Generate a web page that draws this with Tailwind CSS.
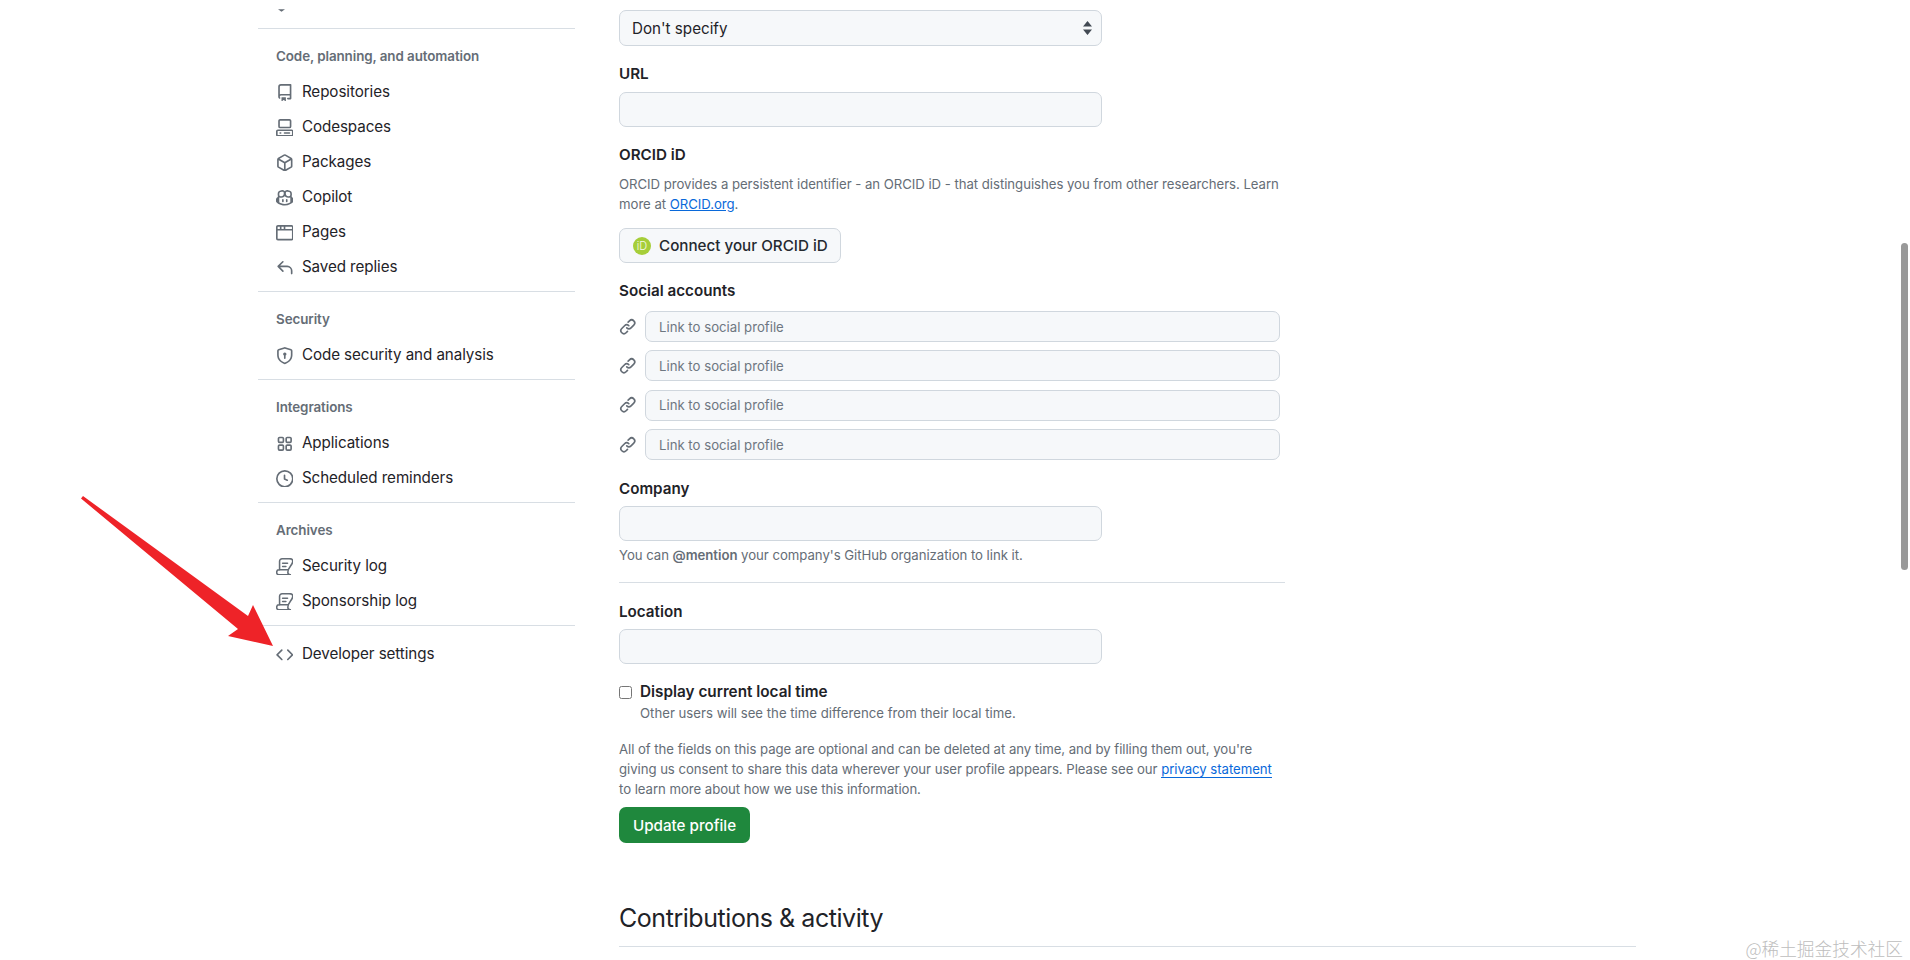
<!DOCTYPE html>
<html lang="en">
<head>
<meta charset="UTF-8">
<script src="https://cdn.jsdelivr.net/npm/@tailwindcss/browser@4"></script>
<title>Public profile</title>
</head>
<body class="relative h-screen overflow-hidden bg-white text-[#1f2328] font-['Inter',sans-serif]">

<div class="flex pl-[258px]">
  <!-- sidebar -->
  <nav class="w-[317px] shrink-0 text-[15.2px] tracking-[-0.08px] text-[#1f2328]">
    <div class="h-[28px] pl-[20px] pt-[9px]">
      <svg width="7" height="3" viewBox="0 0 8 3" class="block fill-[#656d76]"><path d="M0 0h8L4 3Z"/></svg>
    </div>

    <div class="border-t border-[#d8dee4] pb-[6px]">
      <h3 class="pt-[17px] pb-[8.8px] pl-[18px] leading-[20px] text-[13.4px] font-semibold text-[#656d76]">Code, planning, and automation</h3>
      <a class="flex h-[35.1px] items-center gap-[8.8px] pl-[17.5px]">
        <svg width="17.6" height="17.6" viewBox="0 0 16 16" class="fill-[#656d76]"><path d="M2 2.5A2.5 2.5 0 0 1 4.5 0h8.75a.75.75 0 0 1 .75.75v12.5a.75.75 0 0 1-.75.75h-2.5a.75.75 0 0 1 0-1.5h1.75v-2h-8a1 1 0 0 0-.714 1.7.75.75 0 1 1-1.072 1.05A2.495 2.495 0 0 1 2 11.5Zm10.5-1h-8a1 1 0 0 0-1 1v6.708A2.486 2.486 0 0 1 4.5 9h8ZM5 12.25a.25.25 0 0 1 .25-.25h3.5a.25.25 0 0 1 .25.25v3.25a.25.25 0 0 1-.4.2l-1.45-1.087a.249.249 0 0 0-.3 0L5.4 15.7a.25.25 0 0 1-.4-.2Z"/></svg>
        Repositories
      </a>
      <a class="flex h-[35.1px] items-center gap-[8.8px] pl-[17.5px]">
        <svg width="17.6" height="17.6" viewBox="0 0 16 16" class="fill-[#656d76]"><path d="M0 11.25c0-.966.784-1.75 1.75-1.75h12.5c.966 0 1.75.784 1.75 1.75v3A1.75 1.75 0 0 1 14.25 16H1.75A1.75 1.75 0 0 1 0 14.25Zm2-9.5C2 .784 2.784 0 3.75 0h8.5C13.216 0 14 .784 14 1.75v5a1.75 1.75 0 0 1-1.75 1.75h-8.5A1.75 1.75 0 0 1 2 6.75Zm1.75-.25a.25.25 0 0 0-.25.25v5c0 .138.112.25.25.25h8.5a.25.25 0 0 0 .25-.25v-5a.25.25 0 0 0-.25-.25Zm-2 9.5a.25.25 0 0 0-.25.25v3c0 .138.112.25.25.25h12.5a.25.25 0 0 0 .25-.25v-3a.25.25 0 0 0-.25-.25Z"/><path d="M7 12.75a.75.75 0 0 1 .75-.75h4.5a.75.75 0 0 1 0 1.5h-4.5a.75.75 0 0 1-.75-.75Zm-4 0a.75.75 0 0 1 .75-.75h.5a.75.75 0 0 1 0 1.5h-.5a.75.75 0 0 1-.75-.75Z"/></svg>
        Codespaces
      </a>
      <a class="flex h-[35.1px] items-center gap-[8.8px] pl-[17.5px]">
        <svg width="17.6" height="17.6" viewBox="0 0 16 16" class="fill-[#656d76]"><path d="m8.878.392 5.25 3.045c.54.314.872.89.872 1.514v6.098a1.75 1.75 0 0 1-.872 1.514l-5.25 3.045a1.75 1.75 0 0 1-1.756 0l-5.25-3.045A1.75 1.75 0 0 1 1 11.049V4.951c0-.624.332-1.201.872-1.514L7.122.392a1.75 1.75 0 0 1 1.756 0ZM7.875 1.69l-4.63 2.685L8 7.133l4.755-2.758-4.63-2.685a.248.248 0 0 0-.25 0ZM2.5 5.677v5.372c0 .09.047.171.125.216l4.625 2.683V8.432Zm6.25 8.271 4.625-2.683a.25.25 0 0 0 .125-.216V5.677L8.75 8.432Z"/></svg>
        Packages
      </a>
      <a class="flex h-[35.1px] items-center gap-[8.8px] pl-[17.5px]">
        <svg width="17.6" height="17.6" viewBox="0 0 16 16" class="fill-[#656d76]"><path d="M7.998 15.035c-4.562 0-7.873-2.914-7.998-3.749V9.338c.085-.628.677-1.686 1.588-2.065.013-.07.024-.143.036-.218.029-.183.06-.384.126-.612-.201-.508-.254-1.084-.254-1.656 0-.87.128-1.769.693-2.484.579-.733 1.494-1.124 2.724-1.261 1.206-.134 2.262.034 2.944.765.05.053.096.108.139.165.044-.057.094-.112.143-.165.682-.731 1.738-.899 2.944-.765 1.23.137 2.145.528 2.724 1.261.566.715.693 1.614.693 2.484 0 .572-.053 1.148-.254 1.656.066.228.098.429.126.612.012.076.024.148.037.218.924.385 1.522 1.471 1.591 2.095v1.872c0 .766-3.351 3.795-8.002 3.795Zm0-1.485c2.28 0 4.584-1.11 5.002-1.433V7.862l-.023-.116c-.49.21-1.075.291-1.727.291-1.146 0-2.059-.327-2.71-.991A3.222 3.222 0 0 1 8 6.303a3.24 3.24 0 0 1-.544.743c-.65.664-1.563.991-2.71.991-.652 0-1.236-.081-1.727-.291l-.023.116v4.255c.419.323 2.722 1.433 5.002 1.433ZM6.762 2.83c-.193-.206-.637-.413-1.682-.297-1.019.113-1.479.404-1.713.7-.247.312-.369.789-.369 1.554 0 .793.129 1.171.308 1.371.162.181.519.379 1.442.379.853 0 1.339-.235 1.638-.54.315-.322.527-.827.617-1.553.117-.935-.037-1.395-.241-1.614Zm4.155-.297c-1.044-.116-1.488.091-1.681.297-.204.219-.359.679-.242 1.614.091.726.303 1.231.618 1.553.299.305.784.54 1.638.54.922 0 1.28-.198 1.442-.379.179-.2.308-.578.308-1.371 0-.765-.123-1.242-.37-1.554-.233-.296-.693-.587-1.713-.7Z"/><path d="M6.25 9.037a.75.75 0 0 1 .75.75v1.501a.75.75 0 0 1-1.5 0V9.787a.75.75 0 0 1 .75-.75Zm4.25.75v1.501a.75.75 0 0 1-1.5 0V9.787a.75.75 0 0 1 1.5 0Z"/></svg>
        Copilot
      </a>
      <a class="flex h-[35.1px] items-center gap-[8.8px] pl-[17.5px]">
        <svg width="17.6" height="17.6" viewBox="0 0 16 16" class="fill-[#656d76]"><path d="M0 2.75C0 1.784.784 1 1.75 1h12.5c.966 0 1.75.784 1.75 1.75v10.5A1.75 1.75 0 0 1 14.25 15H1.75A1.75 1.75 0 0 1 0 13.25ZM14.5 6h-13v7.25c0 .138.112.25.25.25h12.5a.25.25 0 0 0 .25-.25Zm-6-3.5v2h6v-1.75a.25.25 0 0 0-.25-.25ZM5 2.5v2h2v-2Zm-3.25 0a.25.25 0 0 0-.25.25V4.5h2v-2Z"/></svg>
        Pages
      </a>
      <a class="flex h-[35.1px] items-center gap-[8.8px] pl-[17.5px]">
        <svg width="17.6" height="17.6" viewBox="0 0 16 16" class="fill-[#656d76]"><path d="M6.78 1.97a.75.75 0 0 1 0 1.06L3.81 6h6.44A4.75 4.75 0 0 1 15 10.75v2.5a.75.75 0 0 1-1.5 0v-2.5a3.25 3.25 0 0 0-3.25-3.25H3.81l2.97 2.97a.749.749 0 0 1-.326 1.275.749.749 0 0 1-.734-.215L1.47 7.28a.75.75 0 0 1 0-1.06l4.25-4.25a.75.75 0 0 1 1.06 0Z"/></svg>
        Saved replies
      </a>
    </div>

    <div class="border-t border-[#d8dee4] pb-[6px]">
      <h3 class="pt-[17px] pb-[8.8px] pl-[18px] leading-[20px] text-[13.4px] font-semibold text-[#656d76]">Security</h3>
      <a class="flex h-[35.1px] items-center gap-[8.8px] pl-[17.5px]">
        <svg width="17.6" height="17.6" viewBox="0 0 16 16" class="fill-[#656d76]"><path d="m8.533.133 5.25 1.68A1.75 1.75 0 0 1 15 3.48V7c0 1.566-.32 3.182-1.303 4.682-.983 1.498-2.585 2.813-5.032 3.855a1.697 1.697 0 0 1-1.33 0c-2.447-1.042-4.049-2.357-5.032-3.855C1.32 10.182 1 8.566 1 7V3.48a1.75 1.75 0 0 1 1.217-1.667l5.25-1.68a1.748 1.748 0 0 1 1.066 0Zm-.61 1.429.001.001-5.25 1.68a.251.251 0 0 0-.174.237V7c0 1.36.275 2.666 1.057 3.859.784 1.194 2.121 2.342 4.366 3.298a.196.196 0 0 0 .154 0c2.245-.957 3.582-2.103 4.366-3.297C13.225 9.666 13.5 8.358 13.5 7V3.48a.25.25 0 0 0-.174-.238l-5.25-1.68a.25.25 0 0 0-.153 0ZM9.5 6.5c0 .536-.286 1.032-.75 1.3v2.45a.75.75 0 0 1-1.5 0V7.8A1.5 1.5 0 1 1 9.5 6.5Z"/></svg>
        Code security and analysis
      </a>
    </div>

    <div class="border-t border-[#d8dee4] pb-[6px]">
      <h3 class="pt-[17px] pb-[8.8px] pl-[18px] leading-[20px] text-[13.4px] font-semibold text-[#656d76]">Integrations</h3>
      <a class="flex h-[35.1px] items-center gap-[8.8px] pl-[17.5px]">
        <svg width="17.6" height="17.6" viewBox="0 0 16 16" class="fill-[#656d76]"><path d="M1.5 3.25c0-.966.784-1.75 1.75-1.75h2.5c.966 0 1.75.784 1.75 1.75v2.5A1.75 1.75 0 0 1 5.75 7.5h-2.5A1.75 1.75 0 0 1 1.5 5.75Zm7 0c0-.966.784-1.75 1.75-1.75h2.5c.966 0 1.75.784 1.75 1.75v2.5a1.75 1.75 0 0 1-1.75 1.75h-2.5A1.75 1.75 0 0 1 8.5 5.75Zm-7 7c0-.966.784-1.75 1.75-1.75h2.5c.966 0 1.75.784 1.75 1.75v2.5a1.75 1.75 0 0 1-1.75 1.75h-2.5a1.75 1.75 0 0 1-1.75-1.75Zm7 0c0-.966.784-1.75 1.75-1.75h2.5c.966 0 1.75.784 1.75 1.75v2.5a1.75 1.75 0 0 1-1.75 1.75h-2.5a1.75 1.75 0 0 1-1.75-1.75ZM3.25 3a.25.25 0 0 0-.25.25v2.5c0 .138.112.25.25.25h2.5A.25.25 0 0 0 6 5.75v-2.5A.25.25 0 0 0 5.75 3Zm7 0a.25.25 0 0 0-.25.25v2.5c0 .138.112.25.25.25h2.5a.25.25 0 0 0 .25-.25v-2.5a.25.25 0 0 0-.25-.25Zm-7 7a.25.25 0 0 0-.25.25v2.5c0 .138.112.25.25.25h2.5a.25.25 0 0 0 .25-.25v-2.5a.25.25 0 0 0-.25-.25Zm7 0a.25.25 0 0 0-.25.25v2.5c0 .138.112.25.25.25h2.5a.25.25 0 0 0 .25-.25v-2.5a.25.25 0 0 0-.25-.25Z"/></svg>
        Applications
      </a>
      <a class="flex h-[35.1px] items-center gap-[8.8px] pl-[17.5px]">
        <svg width="17.6" height="17.6" viewBox="0 0 16 16" class="fill-[#656d76]"><path d="M8 0a8 8 0 1 1 0 16A8 8 0 0 1 8 0ZM1.5 8a6.5 6.5 0 1 0 13 0 6.5 6.5 0 0 0-13 0Zm7-3.25v2.992l2.028.812a.75.75 0 0 1-.557 1.392l-2.5-1A.751.751 0 0 1 7 8.25v-3.5a.75.75 0 0 1 1.5 0Z"/></svg>
        Scheduled reminders
      </a>
    </div>

    <div class="border-t border-[#d8dee4] pb-[6px]">
      <h3 class="pt-[17px] pb-[8.8px] pl-[18px] leading-[20px] text-[13.4px] font-semibold text-[#656d76]">Archives</h3>
      <a class="flex h-[35.1px] items-center gap-[8.8px] pl-[17.5px]">
        <svg width="17.6" height="17.6" viewBox="0 0 16 16" fill="none" class="stroke-[#656d76]" stroke-width="1.4" stroke-linecap="round" stroke-linejoin="round"><path d="M13 .75H5.500A2.250 2.250 0 0 0 3.250 3V10.750H2.750A2.250 2.250 0 0 0 3 15.250H13"/><path d="M13 .75A2.250 2.250 0 0 1 15.250 3c0 3.500-4.500 5.500-4.500 10A2.250 2.250 0 0 0 13 15.250"/><path d="M3.250 10.750H10.750M6 4.750h4.500M6 7.750h3"/></svg>
        Security log
      </a>
      <a class="flex h-[35.1px] items-center gap-[8.8px] pl-[17.5px]">
        <svg width="17.6" height="17.6" viewBox="0 0 16 16" fill="none" class="stroke-[#656d76]" stroke-width="1.4" stroke-linecap="round" stroke-linejoin="round"><path d="M13 .75H5.500A2.250 2.250 0 0 0 3.250 3V10.750H2.750A2.250 2.250 0 0 0 3 15.250H13"/><path d="M13 .75A2.250 2.250 0 0 1 15.250 3c0 3.500-4.500 5.500-4.500 10A2.250 2.250 0 0 0 13 15.250"/><path d="M3.250 10.750H10.750M6 4.750h4.500M6 7.750h3"/></svg>
        Sponsorship log
      </a>
    </div>

    <div class="border-t border-[#d8dee4] pt-[10.600px]">
      <a class="flex h-[35.1px] items-center gap-[8.8px] pl-[17.5px]">
        <svg width="17.6" height="17.6" viewBox="0 0 16 16" class="fill-[#656d76]"><path d="m11.28 3.22 4.25 4.25a.75.75 0 0 1 0 1.06l-4.25 4.25a.749.749 0 0 1-1.275-.326.749.749 0 0 1 .215-.734L13.94 8l-3.72-3.72a.749.749 0 0 1 .326-1.275.749.749 0 0 1 .734.215Zm-6.56 0a.751.751 0 0 1 1.042.018.751.751 0 0 1 .018 1.042L2.06 8l3.72 3.72a.749.749 0 0 1-.326 1.275.749.749 0 0 1-.734-.215L.47 8.53a.75.75 0 0 1 0-1.06Z"/></svg>
        Developer settings
      </a>
    </div>
  </nav>

  <!-- form -->
  <main class="ml-[44px] w-[1017px] text-[13.2px] leading-[20px]">
    <div class="relative mt-[10px] w-[483px]">
      <select class="block h-[36px] w-full appearance-none rounded-[7px] border border-[#d0d7de] bg-[#f6f8fa] pl-[12px] pt-[1px] text-[15.2px]">
        <option>Don't specify</option>
      </select>
      <svg width="9" height="14" viewBox="0 0 9 14" class="absolute right-[10px] top-[11px] fill-[#424a53]"><path d="M4.5 0 9 5.5H0ZM4.5 14 0 8.500h9Z"/></svg>
    </div>

    <label class="mt-[18px] block text-[15.2px] font-semibold">URL</label>
    <input class="mt-[8px] block h-[35px] w-[483px] rounded-[7px] border border-[#d0d7de] bg-[#f6f8fa]">

    <label class="mt-[18px] block text-[15.2px] font-semibold">ORCID iD</label>
    <p class="mt-[9px] w-[664px] tracking-[-0.04px] text-[#656d76]">ORCID provides a persistent identifier - an ORCID iD - that distinguishes you from other researchers. Learn more at <a class="text-[#0969da] underline">ORCID.org</a>.</p>
    <button class="mt-[14px] flex h-[35px] w-[222px] items-center gap-[8px] rounded-[7px] border border-[#d0d7de] bg-[#f6f8fa] pl-[13px] text-[15.2px] font-medium text-[#24292f]">
      <span class="flex h-[18px] w-[18px] items-center justify-center rounded-full bg-[#a6ce39] text-[11px] font-light text-white/90">iD</span>
      Connect your ORCID iD
    </button>

    <label class="mt-[18px] block text-[15.2px] font-semibold">Social accounts</label>
    <div class="mt-[10px] flex w-[661px] flex-col gap-[8.4px]">
      <div class="flex items-center gap-[8.4px]">
        <svg width="17.600" height="17.600" viewBox="0 0 16 16" class="fill-[#656d76]"><path d="m7.775 3.275 1.25-1.25a3.5 3.5 0 1 1 4.95 4.95l-2.5 2.5a3.5 3.5 0 0 1-4.95 0 .751.751 0 0 1 .018-1.042.751.751 0 0 1 1.042-.018 1.998 1.998 0 0 0 2.83 0l2.5-2.5a2.002 2.002 0 0 0-2.83-2.83l-1.25 1.25a.751.751 0 0 1-1.042-.018.751.751 0 0 1-.018-1.042Zm-4.69 9.64a1.998 1.998 0 0 0 2.83 0l1.25-1.25a.751.751 0 0 1 1.042.018.751.751 0 0 1 .018 1.042l-1.25 1.25a3.5 3.5 0 1 1-4.95-4.95l2.5-2.5a3.5 3.5 0 0 1 4.95 0 .751.751 0 0 1-.018 1.042.751.751 0 0 1-1.042.018 1.998 1.998 0 0 0-2.83 0l-2.5 2.5a1.998 1.998 0 0 0 0 2.83Z"/></svg>
        <input placeholder="Link to social profile" class="h-[31px] flex-1 rounded-[7px] border border-[#d0d7de] bg-[#f6f8fa] pl-[13px] placeholder:text-[#6e7781]">
      </div>
      <div class="flex items-center gap-[8.4px]">
        <svg width="17.600" height="17.600" viewBox="0 0 16 16" class="fill-[#656d76]"><path d="m7.775 3.275 1.25-1.25a3.5 3.5 0 1 1 4.95 4.95l-2.5 2.5a3.5 3.5 0 0 1-4.95 0 .751.751 0 0 1 .018-1.042.751.751 0 0 1 1.042-.018 1.998 1.998 0 0 0 2.83 0l2.5-2.5a2.002 2.002 0 0 0-2.83-2.83l-1.25 1.25a.751.751 0 0 1-1.042-.018.751.751 0 0 1-.018-1.042Zm-4.69 9.64a1.998 1.998 0 0 0 2.83 0l1.25-1.25a.751.751 0 0 1 1.042.018.751.751 0 0 1 .018 1.042l-1.25 1.25a3.5 3.5 0 1 1-4.95-4.95l2.5-2.5a3.5 3.5 0 0 1 4.95 0 .751.751 0 0 1-.018 1.042.751.751 0 0 1-1.042.018 1.998 1.998 0 0 0-2.83 0l-2.5 2.5a1.998 1.998 0 0 0 0 2.83Z"/></svg>
        <input placeholder="Link to social profile" class="h-[31px] flex-1 rounded-[7px] border border-[#d0d7de] bg-[#f6f8fa] pl-[13px] placeholder:text-[#6e7781]">
      </div>
      <div class="flex items-center gap-[8.4px]">
        <svg width="17.600" height="17.600" viewBox="0 0 16 16" class="fill-[#656d76]"><path d="m7.775 3.275 1.25-1.25a3.5 3.5 0 1 1 4.95 4.95l-2.5 2.5a3.5 3.5 0 0 1-4.95 0 .751.751 0 0 1 .018-1.042.751.751 0 0 1 1.042-.018 1.998 1.998 0 0 0 2.83 0l2.5-2.5a2.002 2.002 0 0 0-2.83-2.83l-1.25 1.25a.751.751 0 0 1-1.042-.018.751.751 0 0 1-.018-1.042Zm-4.69 9.64a1.998 1.998 0 0 0 2.83 0l1.25-1.25a.751.751 0 0 1 1.042.018.751.751 0 0 1 .018 1.042l-1.25 1.25a3.5 3.5 0 1 1-4.95-4.95l2.5-2.5a3.5 3.5 0 0 1 4.95 0 .751.751 0 0 1-.018 1.042.751.751 0 0 1-1.042.018 1.998 1.998 0 0 0-2.83 0l-2.5 2.5a1.998 1.998 0 0 0 0 2.83Z"/></svg>
        <input placeholder="Link to social profile" class="h-[31px] flex-1 rounded-[7px] border border-[#d0d7de] bg-[#f6f8fa] pl-[13px] placeholder:text-[#6e7781]">
      </div>
      <div class="flex items-center gap-[8.4px]">
        <svg width="17.600" height="17.600" viewBox="0 0 16 16" class="fill-[#656d76]"><path d="m7.775 3.275 1.25-1.25a3.5 3.5 0 1 1 4.95 4.95l-2.5 2.5a3.5 3.5 0 0 1-4.95 0 .751.751 0 0 1 .018-1.042.751.751 0 0 1 1.042-.018 1.998 1.998 0 0 0 2.83 0l2.5-2.5a2.002 2.002 0 0 0-2.83-2.83l-1.25 1.25a.751.751 0 0 1-1.042-.018.751.751 0 0 1-.018-1.042Zm-4.69 9.64a1.998 1.998 0 0 0 2.83 0l1.25-1.25a.751.751 0 0 1 1.042.018.751.751 0 0 1 .018 1.042l-1.25 1.25a3.5 3.5 0 1 1-4.95-4.95l2.5-2.5a3.5 3.5 0 0 1 4.95 0 .751.751 0 0 1-.018 1.042.751.751 0 0 1-1.042.018 1.998 1.998 0 0 0-2.83 0l-2.5 2.5a1.998 1.998 0 0 0 0 2.83Z"/></svg>
        <input placeholder="Link to social profile" class="h-[31px] flex-1 rounded-[7px] border border-[#d0d7de] bg-[#f6f8fa] pl-[13px] placeholder:text-[#6e7781]">
      </div>
    </div>

    <label class="mt-[19px] block text-[15.2px] font-semibold">Company</label>
    <input class="mt-[7px] block h-[35px] w-[483px] rounded-[7px] border border-[#d0d7de] bg-[#f6f8fa]">
    <p class="mt-[4px] tracking-[-0.04px] text-[#656d76]">You can <strong class="font-semibold">@mention</strong> your company's GitHub organization to link it.</p>
    <div class="mt-[17px] w-[666px] border-t border-[#d8dee4]"></div>

    <label class="mt-[19px] block text-[15.2px] font-semibold">Location</label>
    <input class="mt-[7px] block h-[35px] w-[483px] rounded-[7px] border border-[#d0d7de] bg-[#f6f8fa]">

    <div class="mt-[18px] flex gap-[8px]">
      <input type="checkbox" class="mt-[4px] h-[13px] w-[13px] shrink-0">
      <div>
        <label class="block text-[15.3px] font-semibold">Display current local time</label>
        <p class="mt-[1px] text-[#656d76]">Other users will see the time difference from their local time.</p>
      </div>
    </div>

    <p class="mt-[16px] w-[664px] tracking-[-0.05px] text-[#656d76]">All of the fields on this page are optional and can be deleted at any time, and by filling them out, you're giving us consent to share this data wherever your user profile appears. Please see our <a class="border-b border-[#0969da] text-[#0969da]">privacy statement</a> to learn more about how we use this information.</p>
    <button class="mt-[8px] block h-[36px] w-[131px] rounded-[7px] bg-[#1f883d] pt-[1px] text-[15.2px] font-medium text-white">Update profile</button>

    <h2 class="mt-[57px] text-[25px] leading-[36px] tracking-[-0.45px]">Contributions &amp; activity</h2>
    <div class="mt-[10px] border-t border-[#d8dee4]"></div>
  </main>
</div>

<!-- red annotation arrow -->
<svg width="300" height="700" viewBox="0 0 300 700" class="absolute left-0 top-0 fill-[#ee2328]"><path d="M81 498.500 83 496 248 616 253 605 273 646 228 636 238 629Z"/></svg>

<!-- scrollbar -->
<div class="absolute right-[2px] top-[243px] h-[327px] w-[7px] rounded-full bg-[#999999]"></div>

<!-- watermark -->
<div class="absolute right-[7px] top-[936px] text-[17.7px] leading-[24px] font-light text-[#bdbdbd] font-['Noto_Sans_CJK_SC',sans-serif]">@稀土掘金技术社区</div>

</body>
</html>
